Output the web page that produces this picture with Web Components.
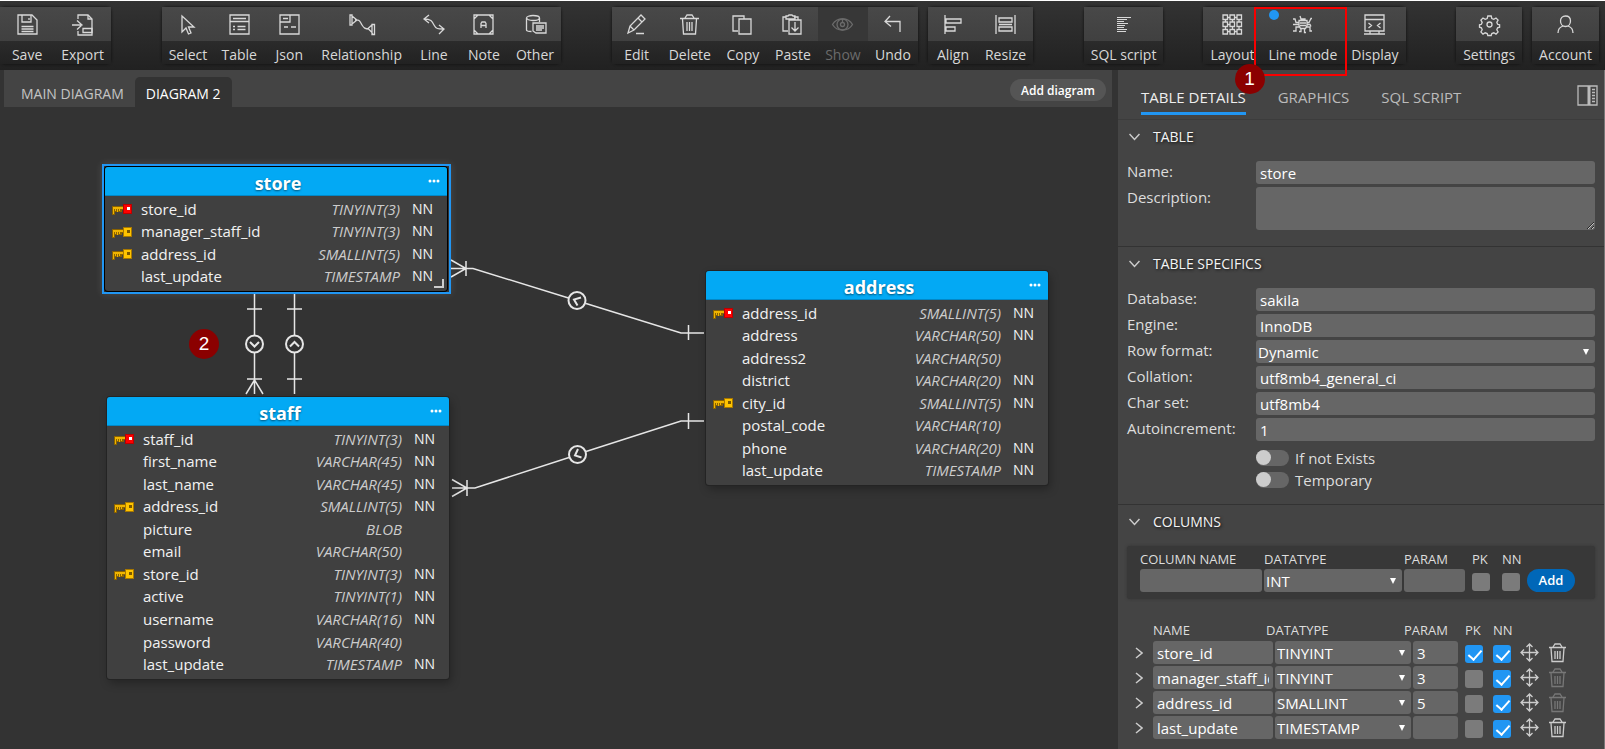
<!DOCTYPE html>
<html lang="en">
<head>
<meta charset="utf-8">
<title>Database diagram editor</title>
<style>
  html, body { height: 100%; }
  body { margin: 0; background: #333; font-family: "Open Sans", "Noto Sans", sans-serif; color: #ddd; overflow: hidden; }
</style>
</head>
<body>
<app-shell></app-shell>
<script>
const ICONS = {
  save: '<path d="M1 1h14l5 5v14H1z"/><path d="M5 1v7h9V1M12 4v2"/><path d="M4.500 12.500h12M4.500 15h12M4.500 17.500h12"/>',
  export: '<path d="M6 5V1h10l4 4v16H6v-4"/><path d="M16 1v4h4M0 11h9M5 6.500l5 4.500-5 4.500M11 14.500h9v4h-9z"/>',
  select: '<path d="M5 2v16l4-4 2.500 6 2.500-1-2.500-6H17z"/>',
  table: '<path d="M1 1h19v19H1zM4 4.500h13M1 7.500h19M4 12.500h2M8.500 12.500h8M4 15.500h2M8.500 15.500h8"/>',
  json: '<path d="M1 1h19v19H1zM1 8h10V1M4 4.500h5M5 13h4M12 13h5"/>',
  relationship: '<path d="M-1 1h2v10h-2zM1 2l5 4-5 4M4 6c5-1 5 2 7 5s3 4 7 4M22 10l-5 4.500 5 5M21 10.500h2.500v10H21z"/>',
  line: '<path d="M6 1L1 5l5 4M1 5c7 0 8 2 10 6s4 4 9 4M16 11l5 4-5 5"/>',
  note: '<path d="M1 1h19v19H1zM1 5l4-4M16 1l4 4M20 16l-4 4M5 20l-4-4M8 14V9.500l1-1.500h3l1 1.500V14M8 11.500h5"/>',
  other: '<ellipse cx="8" cy="4" rx="6.500" ry="2.500"/><path d="M1.500 4v12c0 1 2 1.500 5 1.500M14.500 4v4M8 9h13v10H11l-3-2zM11 12h8M11 14h8M11 16h6"/>',
  edit: '<path d="M2 19l2-7L15 1l4 4L8 16zM12 4l4 4M4 12l4 4M10 19.500h8"/>',
  delete: '<path d="M1 4.500h19M6 4l2-3h5l2 3M3.500 5l1 15h12l1-15M8 8v9M10.500 8v9M13 8v9"/>',
  copy: '<path d="M6 17H1V2h11v3"/><path d="M7 5h12v15H7z"/>',
  paste: '<path d="M6 17H1V3h3M12 3h4v3M4 2h2l1-1h3l1 1h2v3H4zM7 6h12v14H7zM13 8v9M9.500 13.500l3.500 3.500 3.500-3.500"/>',
  show: '<path d="M0.500 10.500C5 3 16 3 20.500 10.500 16 18 5 18 0.500 10.500z"/><circle cx="10.500" cy="10.500" r="5.500"/><circle cx="10.500" cy="10.500" r="2"/><path d="M10.500 8V5"/>',
  undo: '<path d="M8 2L3 7.500l6 5M3 7.500h15V18"/>',
  align: '<path d="M3 1v19M4 5h15v4H4zM4 13h9v4H4z"/>',
  resize: '<path d="M1 1v19M20 1v19M4 4h13v4H4zM4 13h13v4H4zM4 10.500h13"/>',
  script: '<path d="M4 3.500h14M4 5.500h10M4 7.500h7M4 9.500h11M4 11.500h8M4 13.500h7M4 15.500h10M4 17.500h9" stroke-width="1"/>',
  layout: '<path d="M1 1h4.500v4.500H1zM8 1h4.500v4.500H8zM15 1h4.500v4.500H15zM1 8h4.500v4.500H1zM8 8h4.500v4.500H8zM15 8h4.500v4.500H15zM1 15.500h4.500V20H1zM8 15.500h4.500V20H8zM15 15.500h4.500V20H15zM5.500 3.500H8M12.500 3.500H15M3.500 5.500V8M10.500 5.500V8M17 5.500V8M5.500 10.500H8M3.500 12.500v3M10.500 12.500v3M17 12.500v3M5.500 17.500H8M12.500 17.500H15"/>',
  linemode: '<path d="M7 6.500h8v5l-1.500 3h-5L7 11.500zM8 9h6M8 11.500h6M9 6.500V5h4v1.500M9 5L8 2M7 8.500H4L3 5H1M15 8.500h2l2-4h1M7 10.500H1M15 10.500h3l1 2M8 13H4v4H1M14 13h4v4h2M9 14.500v3H7M12.500 14.500v4H14"/>',
  display: '<path d="M1 1h19v16H1zM1 5.500h19M0 20h21M6 17v3M15 17v3M4.500 9l3 2.500-3 2.500M16.500 9l-3 2.500 3 2.500"/>',
  settings: '<circle cx="10.500" cy="10.500" r="2.500"/><path d="M8.800 2h3.400l.6 2.500 2 .8 2.200-1.300 2.100 2.100-1.300 2.200.8 2 2 .5v2.400l-2 .6-.8 2 1.300 2.200-2.100 2.100-2.200-1.300-2 .8-.6 1.900H8.800l-.6-1.900-2-.8-2.200 1.300-2.100-2.100 1.300-2.200-.8-2-1.900-.6v-2.400l1.900-.5.8-2-1.300-2.200L4 4l2.200 1.300 2-.8z"/>',
  account: '<path d="M10.500 2c3 0 5 2 5 5s-2 5.500-5 5.500-5-2.500-5-5.500 2-5 5-5zM3 19c0-4 2-6 5-7M18 19c0-4-2-6-5-7"/>',
  move: '<path d="M9.500 1v17M1 9.500h17M6.500 4l3-3 3 3M6.500 15l3 3 3-3M4 6.500l-3 3 3 3M15 6.500l3 3-3 3"/>',
  bin: '<path d="M1 4.500h17M5 4l2-3h5l2 3M3 5l1 13.500h11L16 5M7 8v8M9.500 8v8M12 8v8"/>',
};
const icon = (name, size = 21) => `<svg width="${size}" height="${size}" viewBox="0 0 ${size} ${size}" fill="none" stroke="currentColor" stroke-width="1.3" overflow="visible" aria-hidden="true">${ICONS[name]}</svg>`;

class BaseElement extends HTMLElement {
  connectedCallback() {
    if (this.shadowRoot) return;
    this.attachShadow({ mode: 'open' }).innerHTML = `<style>*{box-sizing:border-box}${this.css()}</style>${this.html()}`;
  }
}
const define = (name, css, html) => customElements.define(name, class extends BaseElement {
  css() { return css; }
  html() { return typeof html === 'function' ? html(this) : html; }
});
const at = (el, name) => el.getAttribute(name) || '';

/* ---------- toolbar ---------- */
define('tool-button', `
  :host { display: block; position: relative; }
  button { display: grid; grid-template-rows: 34px 23px; min-width: 50px; width: 100%; padding: 0; border: 0; background: none; color: #d8d8d8; font: 14px/27px "Open Sans", sans-serif; }
  .i { display: grid; place-items: center; background: linear-gradient(#484848, #404040); }
  .l { background: linear-gradient(#2b2b2b, #222); padding: 0 7px; white-space: nowrap; }
  button:disabled { color: #6b6b6b; }
  button:disabled .i { background: #373737; }
`, el => `<button type="button"${el.hasAttribute('disabled') ? ' disabled' : ''}><span class="i">${icon(at(el, 'icon'))}</span><span class="l">${at(el, 'label')}</span></button><slot></slot>`);

define('tool-group', `
  :host { display: flex; box-shadow: 0 0 3px #0c0c0c; border-radius: 5px; }
`, '<slot></slot>');

define('step-badge', `
  :host { display: grid; place-items: center; width: 30px; height: 30px; border-radius: 50%; background: #8b0000; color: #fff; font: 19px/30px "Liberation Sans", sans-serif; }
`, '<slot></slot>');

define('mode-marker', `
  .dot { position: absolute; left: 7px; top: 3px; width: 10px; height: 10px; border-radius: 50%; background: #2196f3; }
  .frame { position: absolute; left: -8px; right: -3px; top: 0; height: 69px; border: 2px solid #f80000; z-index: 2; pointer-events: none; }
  step-badge { position: absolute; left: -27px; top: 57px; z-index: 3; }
`, '<span class="dot"></span><span class="frame"></span><step-badge>1</step-badge>');

define('tool-bar', `
  :host { display: block; position: relative; z-index: 2; background: linear-gradient(#333, #212121); border-top: 1px solid #fff; padding: 6px 6px 6px 0; }
  nav { display: flex; justify-content: space-between; }
  .pair { display: flex; gap: 10px; }
  .wide { gap: 40px; }
  .first { width: 111px; }
  .first tool-button { flex: 1; }
`, `<nav aria-label="Tools">
  <tool-group class="first"><tool-button icon="save" label="Save"></tool-button><tool-button icon="export" label="Export"></tool-button></tool-group>
  <tool-group>
    <tool-button icon="select" label="Select"></tool-button><tool-button icon="table" label="Table"></tool-button><tool-button icon="json" label="Json"></tool-button><tool-button icon="relationship" label="Relationship"></tool-button><tool-button icon="line" label="Line"></tool-button><tool-button icon="note" label="Note"></tool-button><tool-button icon="other" label="Other"></tool-button>
  </tool-group>
  <div class="pair">
    <tool-group><tool-button icon="edit" label="Edit"></tool-button><tool-button icon="delete" label="Delete"></tool-button><tool-button icon="copy" label="Copy"></tool-button><tool-button icon="paste" label="Paste"></tool-button><tool-button icon="show" label="Show" disabled></tool-button><tool-button icon="undo" label="Undo"></tool-button></tool-group>
    <tool-group><tool-button icon="align" label="Align"></tool-button><tool-button icon="resize" label="Resize"></tool-button></tool-group>
  </div>
  <div class="pair wide">
    <tool-group><tool-button icon="script" label="SQL script"></tool-button></tool-group>
    <tool-group><tool-button icon="layout" label="Layout"></tool-button><tool-button icon="linemode" label="Line mode"><mode-marker></mode-marker></tool-button><tool-button icon="display" label="Display"></tool-button></tool-group>
  </div>
  <div class="pair">
    <tool-group><tool-button icon="settings" label="Settings"></tool-button></tool-group>
    <tool-group><tool-button icon="account" label="Account"></tool-button></tool-group>
  </div>
</nav>`);

/* ---------- diagram ---------- */
define('diagram-tabs', `
  :host { display: flex; align-items: flex-end; height: 37px; margin-left: 4px; background: #444; }
  a { display: block; height: 30px; padding: 0 11px; color: #c4c4c4; font-size: 14px; line-height: 34px; text-decoration: none; border-radius: 5px 5px 0 0; white-space: nowrap; }
  a.main { margin-left: 6px; }
  a.on { background: #333; color: #fff; }
  button { margin: 0 6px 6px auto; height: 22px; padding: 0 11px; border: 0; border-radius: 11px; background: #555; color: #fff; font: 600 12px/23px "Open Sans", sans-serif; }
`, '<a class="main" href="#main">MAIN DIAGRAM</a><a class="on" href="#diagram2">DIAGRAM 2</a><button type="button">Add diagram</button>');

const key = (head, edge, hole) => `<svg width="20" height="12" viewBox="0 0 20 12" aria-hidden="true"><path d="M0 3h12v4h-2v2H3v3H0z" fill="#8a6200"/><path d="M1 4h11v2H1zM1 6h1v5H1zM3 6h1v2H3zM5 6h1v3H5zM7 6h1v2H7z" fill="#f0b400"/><path d="M11 1h9v10h-9z" fill="${edge}"/><path d="M12 2h7v8h-7z" fill="${head}"/><path d="M15 4h3v3h-3z" fill="${hole}"/></svg>`;
const KEYS = { pk: key('#f00', '#b00', '#fff'), fk: key('#ffc400', '#a87800', '#7a5800'), '': '' };
const ENTITIES = {
  store: ['pk|store_id|TINYINT(3)|NN', 'fk|manager_staff_id|TINYINT(3)|NN', 'fk|address_id|SMALLINT(5)|NN', '|last_update|TIMESTAMP|NN'],
  staff: ['pk|staff_id|TINYINT(3)|NN', '|first_name|VARCHAR(45)|NN', '|last_name|VARCHAR(45)|NN', 'fk|address_id|SMALLINT(5)|NN', '|picture|BLOB|', '|email|VARCHAR(50)|', 'fk|store_id|TINYINT(3)|NN', '|active|TINYINT(1)|NN', '|username|VARCHAR(16)|NN', '|password|VARCHAR(40)|', '|last_update|TIMESTAMP|NN'],
  address: ['pk|address_id|SMALLINT(5)|NN', '|address|VARCHAR(50)|NN', '|address2|VARCHAR(50)|', '|district|VARCHAR(20)|NN', 'fk|city_id|SMALLINT(5)|NN', '|postal_code|VARCHAR(10)|', '|phone|VARCHAR(20)|NN', '|last_update|TIMESTAMP|NN'],
};
define('entity-node', `
  :host { display: flex; flex-direction: column; width: 342px; background: #404040; border-radius: 3px; box-shadow: 0 0 0 1px #242424, 2px 4px 10px rgba(0,0,0,.3); }
  :host([selected]) { box-shadow: 0 0 0 1px #000; }
  .outline { position: absolute; inset: -3px -4px -3px -3px; border: 2px solid #2196f3; box-shadow: 0 0 8px rgba(255,255,255,.12); pointer-events: none; }
  header { display: grid; grid-template-columns: 24px 1fr 20px; align-items: center; height: 29px; background: #03a9f4; border-bottom: 1px solid #0288c7; border-radius: 3px 3px 0 0; color: #fff; }
  h2 { grid-column: 2; margin: 0; padding: 4px 0 0; font-size: 18px; line-height: 24px; font-weight: 700; text-align: center; text-shadow: 0 1px 2px rgba(0,0,0,.5); }
  header svg { margin-left: 1px; }
  .body { flex: 1; padding: 2px 0 3px; }
  table { width: 100%; height: 100%; border-collapse: collapse; table-layout: fixed; }
  td { padding: 0; vertical-align: middle; white-space: nowrap; line-height: 20px; color: #f2f2f2; }
  td.n, td.t, td.q { padding-bottom: 1px; }
  .k { width: 36px; padding-left: 7px; } .k svg { display: block; }
  .n { font-size: 15px; }
  .t { width: 110px; text-align: right; font-size: 15px; font-style: italic; color: #ccc; }
  .q { width: 47px; padding-left: 12px; font-size: 14px; font-weight: 500; }
  .grip { position: absolute; right: 3px; bottom: 3px; width: 10px; height: 9px; border: solid #ccc; border-width: 0 2px 2px 0; }
`, el => `<header><h2>${at(el, 'name')}</h2><svg width="12" height="4" fill="#fff" aria-hidden="true"><circle cx="2" cy="2" r="1.500"/><circle cx="6" cy="2" r="1.500"/><circle cx="10" cy="2" r="1.500"/></svg></header>
<div class="body"><table aria-label="${at(el, 'name')} columns">${ENTITIES[at(el, 'name')].map(r => { const [k, n, t, q] = r.split('|'); return `<tr><td class="k">${KEYS[k]}</td><td class="n">${n}</td><td class="t">${t}</td><td class="q">${q}</td></tr>`; }).join('')}</table></div>${el.hasAttribute('selected') ? '<span class="outline"></span><span class="grip"></span>' : ''}`);

define('diagram-canvas', `
  :host { display: block; position: relative; flex: 1; overflow: hidden; }
  .links { position: absolute; left: 0; top: 0; width: 100%; height: 100%; }
  entity-node, step-badge { position: absolute; }
`, `<svg class="links" fill="none" stroke="#e6e6e6" stroke-width="1.5" aria-hidden="true">
  <g transform="translate(0 -107)">
    <path d="M254.500 294v41M254.500 353v41M247 309h15M247 379h15M246 394l8.500-14 8.500 14"/>
    <path d="M294.500 294v41M294.500 353v41M287 309h15M287 379h15"/>
    <path d="M451 268.500h22l95.500 29.500M586 303.500l95 29.500h23M466 261v15M451 260l15 8.500-15 8.500M688.500 325v15"/>
    <path d="M452 488h23l94-30.500M586 451.500l95-30.500h23M467 480v16M452 479.500l15 8.500-15 8.500M688.500 413v16"/>
    <g stroke-width="2">
      <circle cx="254.500" cy="344" r="8.500"/><path d="M250 342l4.500 4.500 4.500-4.500"/>
      <circle cx="294.500" cy="344" r="8.500"/><path d="M290 346.500l4.500-4.500 4.500 4.500"/>
      <circle cx="577" cy="300.500" r="8.500"/><path d="M581 297.500l-7 2 3.500 6"/>
      <circle cx="577.500" cy="454.500" r="8.500"/><path d="M578 449l-3 6.500 6.500 2"/>
    </g>
  </g>
</svg>
<entity-node name="store" selected style="left:105px;top:60px;height:124px"></entity-node>
<entity-node name="staff" style="left:107px;top:290px;height:282px"></entity-node>
<entity-node name="address" style="left:706px;top:164px;height:214px"></entity-node>
<step-badge style="left:189px;top:222px">2</step-badge>`);

/* ---------- details panel ---------- */
const CONTROLS = `
  input, textarea, select { display: block; width: 100%; height: 23px; margin: 0; padding: 0 4px; border: 0; border-radius: 3px; background: #666; color: #fff; font: 15px/20px "Open Sans", sans-serif; outline: 0; }
  select { appearance: none; padding: 0 2px; }
  .sel { display: block; position: relative; }
  .sel::after { content: ""; position: absolute; right: 6px; top: 9px; border: solid transparent; border-width: 6px 3px 0; border-top-color: #fff; pointer-events: none; }
  input[type=checkbox] { appearance: none; width: 18px; height: 18px; padding: 0; background: #7b7b7b; }
  input[type=checkbox]:checked { background: #2196f3; }
  input[type=checkbox]:checked::before { content: ""; display: block; width: 6px; height: 11px; margin: 2px 0 0 6px; border: solid #fff; border-width: 0 2px 2px 0; transform: rotate(42deg); }
`;

define('form-field', `
  :host { display: grid; grid-template-columns: 129px 1fr; margin-bottom: 3px; }
  label { font-size: 15px; line-height: 20px; color: #ddd; }
  ${CONTROLS}
  textarea { height: 43px; resize: vertical; }
`, el => {
  const type = at(el, 'type'), v = at(el, 'value');
  const c = type === 'area' ? '<textarea id="c"></textarea>' : type === 'select' ? `<span class="sel"><select id="c"><option>${v}</option></select></span>` : `<input id="c" type="text" value="${v}">`;
  return `<label for="c">${at(el, 'label')}:</label>${c}`;
});

define('toggle-switch', `
  :host { display: block; margin-left: 129px; height: 22px; }
  label { display: flex; gap: 6px; font-size: 15px; line-height: 20px; color: #ddd; }
  input { appearance: none; width: 33px; height: 16px; margin: 2px 0 0; border-radius: 8px; background: #666; }
  input::before { content: ""; display: block; width: 15px; height: 15px; border-radius: 50%; background: #ccc; }
`, '<label><input type="checkbox"><span><slot></slot></span></label>');

define('panel-section', `
  :host { display: block; padding: 0 9px; border-bottom: 1px solid #333; }
  :host(:last-of-type) { border-bottom: 0; }
  h3 { display: flex; align-items: center; gap: 13px; height: 41px; margin: 0; padding: 0 2px 8px; font-size: 14px; font-weight: 400; line-height: 20px; color: #f4f4f4; text-shadow: 1px 1px 3px #111; }
`, el => `<h3><svg width="11" height="8" fill="none" stroke="#ccc" stroke-width="1.500" aria-hidden="true"><path d="M.5 1l5 5.500 5-5.500"/></svg>${at(el, 'heading')}</h3><slot></slot>`);

const check = (on, label) => `<input type="checkbox" aria-label="${label}"${on ? ' checked' : ''}>`;
define('new-column', `
  :host { display: block; padding: 3px 13px 7px; background: #383838; border-radius: 3px; box-shadow: 0 0 3px #333; }
  .g { display: grid; grid-template-columns: 122px 138px 61px 24px 28px 48px; column-gap: 2px; align-items: end; }
  .g > * { min-width: 0; }
  label { display: block; font-size: 13px; line-height: 20px; color: #ddd; }
  .p { margin-left: 5px; width: 24px; } .q { margin-left: 9px; width: 24px; }
  ${CONTROLS}
  .p input, .q input { margin-top: 4px; margin-bottom: 1px; }
  button { height: 23px; margin-left: 4px; border: 0; border-radius: 12px; background: #0067b8; color: #fff; font: 600 13px/23px "Open Sans", sans-serif; padding: 0; width: 48px; }
`, `<div class="g">
  <div><label for="n">COLUMN NAME</label><input id="n" type="text"></div>
  <div><label for="d">DATATYPE</label><span class="sel"><select id="d"><option>INT</option></select></span></div>
  <div><label for="r">PARAM</label><input id="r" type="text"></div>
  <div class="p"><label for="k">PK</label><input id="k" type="checkbox"></div>
  <div class="q"><label for="l">NN</label><input id="l" type="checkbox"></div>
  <button type="button">Add</button></div>`);

const COLUMNS = [['store_id', 'TINYINT', '3', true, false], ['manager_staff_id', 'TINYINT', '3', false, true], ['address_id', 'SMALLINT', '5', false, true], ['last_update', 'TIMESTAMP', '', false, false]];
define('column-list', `
  :host { display: block; margin-top: 20px; }
  table { border-collapse: collapse; table-layout: fixed; width: 447px; }
  th { height: 22px; padding: 0; text-align: left; font-size: 13px; font-weight: 400; line-height: 20px; color: #ddd; white-space: nowrap; }
  .back { text-indent: -9px; }
  td { height: 25px; padding: 0 2px 2px 0; }
  thead td { height: 22px; padding: 0; }
  ${CONTROLS}
  td input[type=checkbox] { margin: 3px 0 0; }
  td button { display: block; padding: 0; border: 0; background: none; color: #ccc; height: 19px; }
  td button:disabled { color: #777; }
  svg { display: block; }
`, `<table><colgroup><col style="width:26px"><col style="width:122px"><col style="width:138px"><col style="width:52px"><col style="width:28px"><col style="width:27px"><col style="width:28px"><col style="width:26px"></colgroup>
<thead><tr><td></td><th>NAME</th><th class="back">DATATYPE</th><th class="back">PARAM</th><th>PK</th><th>NN</th><td></td><td></td></tr></thead>
<tbody>${COLUMNS.map(([n, t, p, pk, dis]) => `<tr>
  <td><button type="button" aria-label="Expand ${n}"><svg style="margin-left:8px" width="8" height="12" fill="none" stroke="#ccc" stroke-width="1.500"><path d="M1 1l6 5-6 5"/></svg></button></td>
  <td><input type="text" aria-label="Name" value="${n}"></td>
  <td><span class="sel"><select aria-label="Datatype"><option>${t}</option></select></span></td>
  <td style="padding-right:7px"><input type="text" aria-label="Param" value="${p}"></td>
  <td>${check(pk, 'PK')}</td><td>${check(true, 'NN')}</td>
  <td><button type="button" aria-label="Move ${n}">${icon('move', 19)}</button></td>
  <td><button type="button" aria-label="Delete ${n}"${dis ? ' disabled' : ''}>${icon('bin', 19)}</button></td></tr>`).join('')}</tbody></table>`);

define('details-panel', `
  :host { display: block; width: 487px; background: #444; border-right: 1px solid #777; margin-left: 6px; overflow: hidden; }
  nav { display: flex; gap: 32px; height: 50px; padding: 15px 6px 0 23px; border-bottom: 1px solid #3c3c3c; }
  nav a { height: 30px; font-size: 15px; line-height: 24px; color: #bbb; text-decoration: none; border-bottom: 3px solid transparent; }
  nav a.on { color: #eee; border-color: #2196f3; }
  nav button { margin: 0 0 0 auto; height: 21px; padding: 0; border: 0; background: none; }
  .s1 { padding-bottom: 13px; } .s2 { padding-bottom: 12px; }
  .gap { height: 4px; }
`, `<nav aria-label="Details"><a class="on" href="#details">TABLE DETAILS</a><a href="#graphics">GRAPHICS</a><a href="#sql">SQL SCRIPT</a>
  <button type="button" aria-label="Toggle panel"><svg width="21" height="21" fill="none" stroke="#bbb" stroke-width="1.300" aria-hidden="true"><path d="M1 1h19v19H1z"/><path d="M12 1v19" stroke-width="3"/><path d="M15 4.500h3M15 7.500h3M15 10.500h3M15 13.500h3M15 16.500h3"/></svg></button></nav>
<panel-section class="s1" heading="TABLE"><form-field label="Name" value="store"></form-field><form-field label="Description" type="area"></form-field></panel-section>
<panel-section class="s2" heading="TABLE SPECIFICS">
  <form-field label="Database" value="sakila"></form-field><form-field label="Engine" value="InnoDB"></form-field><form-field label="Row format" type="select" value="Dynamic"></form-field><form-field label="Collation" value="utf8mb4_general_ci"></form-field><form-field label="Char set" value="utf8mb4"></form-field><form-field label="Autoincrement" value="1"></form-field>
  <div class="gap"></div><toggle-switch>If not Exists</toggle-switch><toggle-switch>Temporary</toggle-switch>
</panel-section>
<panel-section heading="COLUMNS"><new-column></new-column><column-list></column-list></panel-section>`);

define('app-shell', `
  :host { display: flex; flex-direction: column; height: 100vh; }
  main { flex: 1; display: flex; min-height: 0; }
  .work { flex: 1; display: flex; flex-direction: column; min-width: 0; }
`, '<tool-bar></tool-bar><main><div class="work"><diagram-tabs></diagram-tabs><diagram-canvas></diagram-canvas></div><details-panel></details-panel></main>');
</script>
</body>
</html>
